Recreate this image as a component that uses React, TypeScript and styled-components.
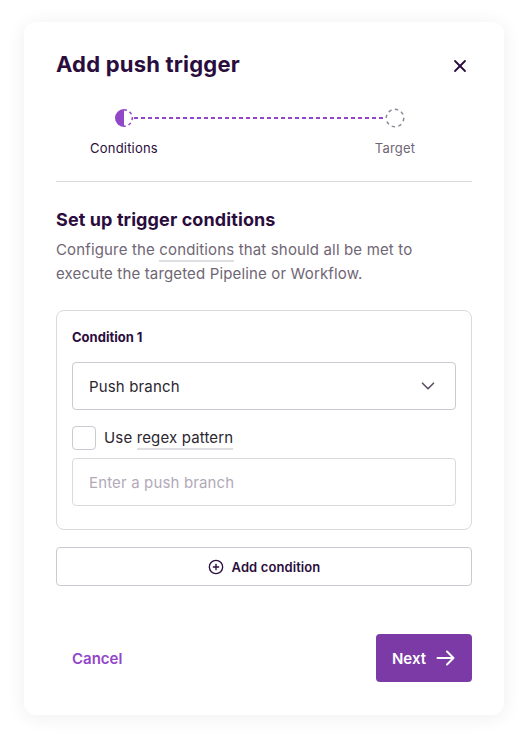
import React from "react";
import styled, { createGlobalStyle } from "styled-components";
import { X, ChevronDown, CirclePlus } from "lucide-react";

const Global = createGlobalStyle`
  html, body { margin: 0; padding: 0; background: #ffffff; }
  body { font-family: Inter, "Noto Sans", sans-serif; color: #2b0d3d; }
  * { box-sizing: border-box; }
`;

const Page = styled.div`
  padding: 22px 24px 26px;
  width: 528px;
`;

const Card = styled.div`
  width: 480px;
  background: #fff;
  border-radius: 12px;
  box-shadow: 0 2px 20px rgba(0, 0, 0, 0.07);
  padding: 24px 32px 33px;
  display: flex;
  flex-direction: column;
`;

const Header = styled.div`
  display: flex;
  align-items: center;
  justify-content: space-between;
  height: 36px;
`;

const Title = styled.h1`
  margin: 0;
  font-size: 22px;
  line-height: 36px;
  font-weight: 700;
  letter-spacing: 0.2px;
  color: #2b0d3d;
`;

const CloseButton = styled.button`
  border: 0;
  background: none;
  padding: 0;
  width: 24px;
  height: 24px;
  margin-top: 4px;
  display: flex;
  align-items: center;
  justify-content: center;
  color: #2b0d3d;
  cursor: pointer;
`;

const Stepper = styled.div`
  display: grid;
  grid-template-columns: 100px 1fr 100px;
  grid-template-rows: 20px 20px;
  row-gap: 10px;
  margin-top: 26px;
  padding: 0 27px 0 18px;
`;

const StepIcon = styled.div`
  display: flex;
  justify-content: center;
  align-items: center;
`;

const Connector = styled.div`
  align-self: center;
  margin: 0 -40px;
  height: 2px;
  background: repeating-linear-gradient(
    to right,
    #9247c9 0 4px,
    transparent 4px 7px
  );
`;

const StepLabel = styled.div<{ $active?: boolean }>`
  text-align: center;
  font-size: 13px;
  line-height: 20px;
  letter-spacing: 0.2px;
  color: ${(p) => (p.$active ? "#2b0d3d" : "#6f6675")};
`;

const Divider = styled.hr`
  border: 0;
  border-top: 1px solid #dcd9de;
  margin: 23px 0 0;
`;

const SectionTitle = styled.h2`
  margin: 24px 0 0;
  font-size: 18px;
  line-height: 28px;
  font-weight: 700;
  letter-spacing: 0.1px;
  color: #2b0d3d;
`;

const Description = styled.p`
  margin: 4px 0 0;
  max-width: 372px;
  font-size: 15px;
  line-height: 24px;
  letter-spacing: 0.15px;
  color: #6f6675;
`;

const Term = styled.span`
  border-bottom: 2px solid #e0dde3;
  padding-bottom: 1px;
`;

const ConditionCard = styled.div`
  margin-top: 24px;
  border: 1px solid #dcd9de;
  border-radius: 8px;
  padding: 16px 15px 23px;
  display: flex;
  flex-direction: column;
`;

const ConditionLabel = styled.div`
  font-size: 13px;
  line-height: 20px;
  font-weight: 700;
  color: #2b0d3d;
`;

const Select = styled.div`
  margin-top: 15px;
  height: 48px;
  border: 1px solid #cdc8d1;
  border-radius: 4px;
  display: flex;
  align-items: center;
  justify-content: space-between;
  padding: 0 16px;
  font-size: 15px;
  letter-spacing: 0.15px;
  color: #2b2630;
`;

const CheckRow = styled.label`
  margin-top: 16px;
  display: flex;
  align-items: center;
  gap: 8px;
  font-size: 15px;
  line-height: 24px;
  letter-spacing: 0.15px;
  color: #2b2630;
`;

const CheckBox = styled.span`
  width: 24px;
  height: 24px;
  border: 1px solid #cdc8d1;
  border-radius: 4px;
  background: #fff;
`;

const TextInput = styled.input`
  margin-top: 8px;
  height: 48px;
  border: 1px solid #dcd9de;
  border-radius: 4px;
  padding: 0 16px;
  font-family: inherit;
  font-size: 15px;
  letter-spacing: 0.15px;
  color: #2b2630;
  outline: none;
  &::placeholder {
    color: #b2aab8;
  }
`;

const AddButton = styled.button`
  margin-top: 17px;
  height: 39px;
  border: 1px solid #cdc8d1;
  border-radius: 4px;
  background: #fff;
  display: flex;
  align-items: center;
  justify-content: center;
  gap: 8px;
  font-family: inherit;
  font-size: 13px;
  font-weight: 600;
  letter-spacing: 0.1px;
  color: #2b0d3d;
  cursor: pointer;
`;

const Footer = styled.div`
  margin-top: 48px;
  display: flex;
  align-items: center;
  justify-content: space-between;
`;

const CancelButton = styled.button`
  border: 0;
  background: none;
  padding: 0 16px;
  height: 48px;
  font-family: inherit;
  font-size: 15px;
  font-weight: 600;
  color: #9247c9;
  cursor: pointer;
`;

const NextButton = styled.button`
  width: 96px;
  height: 48px;
  border: 0;
  border-radius: 4px;
  background: #7b3aa5;
  color: #fff;
  display: flex;
  align-items: center;
  justify-content: center;
  gap: 10px;
  font-family: inherit;
  font-size: 15px;
  font-weight: 600;
  cursor: pointer;
`;

const HalfCircle = () => (
  <svg width="20" height="20" viewBox="0 0 20 20">
    <path d="M10 1 A9 9 0 0 0 10 19 Z" fill="#9247c9" />
    <path
      d="M10 1.75 A8.25 8.25 0 0 1 10 18.25"
      fill="none"
      stroke="#9247c9"
      strokeWidth="1.5"
      strokeDasharray="3 3"
    />
  </svg>
);

const DashedCircle = () => (
  <svg width="20" height="20" viewBox="0 0 20 20">
    <circle
      cx="10"
      cy="10"
      r="8.75"
      fill="none"
      stroke="#8f8796"
      strokeWidth="1.5"
      strokeDasharray="3.4 3.4"
    />
  </svg>
);

const Arrow = () => (
  <svg width="20" height="20" viewBox="0 0 20 20" fill="none">
    <path
      d="M1.5 10h16M11 3.5l6.5 6.5-6.5 6.5"
      stroke="#fff"
      strokeWidth="2"
      strokeLinecap="round"
      strokeLinejoin="round"
    />
  </svg>
);

export default function App() {
  return (
    <>
      <Global />
      <Page>
        <Card>
          <Header>
            <Title>Add push trigger</Title>
            <CloseButton aria-label="Close">
              <X size={20} strokeWidth={2.2} />
            </CloseButton>
          </Header>
          <Stepper>
            <StepIcon>
              <HalfCircle />
            </StepIcon>
            <Connector />
            <StepIcon>
              <DashedCircle />
            </StepIcon>
            <StepLabel $active>Conditions</StepLabel>
            <span />
            <StepLabel>Target</StepLabel>
          </Stepper>
          <Divider />
          <SectionTitle>Set up trigger conditions</SectionTitle>
          <Description>
            Configure the <Term>conditions</Term> that should all be met to
            execute the targeted Pipeline or Workflow.
          </Description>
          <ConditionCard>
            <ConditionLabel>Condition 1</ConditionLabel>
            <Select>
              <span>Push branch</span>
              <ChevronDown size={22} strokeWidth={1.8} color="#5c5066" />
            </Select>
            <CheckRow>
              <CheckBox />
              <span>
                Use <Term>regex pattern</Term>
              </span>
            </CheckRow>
            <TextInput placeholder="Enter a push branch" />
          </ConditionCard>
          <AddButton>
            <CirclePlus size={16} strokeWidth={2} />
            Add condition
          </AddButton>
          <Footer>
            <CancelButton>Cancel</CancelButton>
            <NextButton>
              Next
              <Arrow />
            </NextButton>
          </Footer>
        </Card>
      </Page>
    </>
  );
}
